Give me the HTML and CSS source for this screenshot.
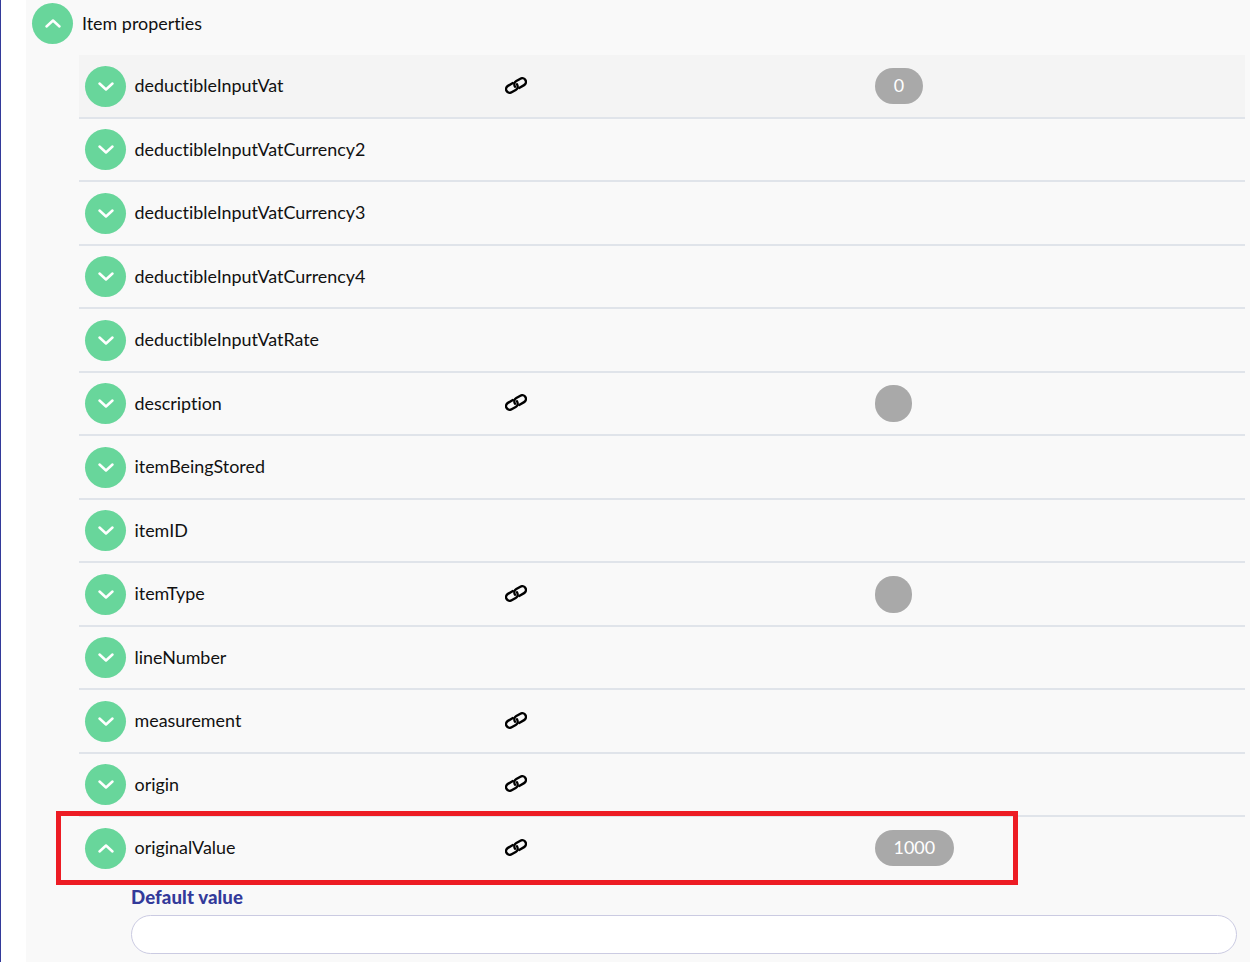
FILE: index.html
```html
<!DOCTYPE html>
<html lang="en">
<head>
<meta charset="utf-8">
<title>Item properties</title>
<link rel="stylesheet" href="styles.css">
</head>
<body>
<svg class="defs" width="0" height="0" aria-hidden="true">
  <defs>
    <symbol id="down" viewBox="0 0 18 11"><path d="M2.500 2.500l6.500 6 6.500-6" fill="none" stroke="#fff" stroke-width="2.500" stroke-linecap="round" stroke-linejoin="round"/></symbol>
    <symbol id="up" viewBox="0 0 18 11"><path d="M2.500 8.500l6.500-6 6.500 6" fill="none" stroke="#fff" stroke-width="2.500" stroke-linecap="round" stroke-linejoin="round"/></symbol>
    <symbol id="link" viewBox="0 0 22 17">
      <g transform="translate(11 8.500) rotate(-30)" fill="none" stroke="#000" stroke-width="2.400" stroke-linecap="round">
        <path d="M-1.500 -3.700H-7.200a3.700 3.700 0 0 0 0 7.400H-2.500C-0.300 3.700 1.500 1.800 1.500 -0.600"/>
        <path d="M1.500 3.700H7.200a3.700 3.700 0 0 0 0-7.400H2.500C0.300 -3.700 -1.500 -1.800 -1.500 0.600"/>
      </g>
    </symbol>
  </defs>
</svg>
<main class="panel">
  <header class="head">
    <span class="toggle"><svg class="chev"><use href="#up"/></svg></span>
    <span class="name">Item properties</span>
  </header>
  <div class="list">
    <div class="row first"><span class="toggle"><svg class="chev"><use href="#down"/></svg></span><span class="name">deductibleInputVat</span><svg class="link"><use href="#link"/></svg><span class="pill">0</span></div>
    <div class="row"><span class="toggle"><svg class="chev"><use href="#down"/></svg></span><span class="name">deductibleInputVatCurrency2</span></div>
    <div class="row"><span class="toggle"><svg class="chev"><use href="#down"/></svg></span><span class="name">deductibleInputVatCurrency3</span></div>
    <div class="row"><span class="toggle"><svg class="chev"><use href="#down"/></svg></span><span class="name">deductibleInputVatCurrency4</span></div>
    <div class="row"><span class="toggle"><svg class="chev"><use href="#down"/></svg></span><span class="name">deductibleInputVatRate</span></div>
    <div class="row"><span class="toggle"><svg class="chev"><use href="#down"/></svg></span><span class="name">description</span><svg class="link"><use href="#link"/></svg><span class="pill empty"></span></div>
    <div class="row"><span class="toggle"><svg class="chev"><use href="#down"/></svg></span><span class="name">itemBeingStored</span></div>
    <div class="row"><span class="toggle"><svg class="chev"><use href="#down"/></svg></span><span class="name">itemID</span></div>
    <div class="row"><span class="toggle"><svg class="chev"><use href="#down"/></svg></span><span class="name">itemType</span><svg class="link"><use href="#link"/></svg><span class="pill empty"></span></div>
    <div class="row"><span class="toggle"><svg class="chev"><use href="#down"/></svg></span><span class="name">lineNumber</span></div>
    <div class="row"><span class="toggle"><svg class="chev"><use href="#down"/></svg></span><span class="name">measurement</span><svg class="link"><use href="#link"/></svg></div>
    <div class="row"><span class="toggle"><svg class="chev"><use href="#down"/></svg></span><span class="name">origin</span><svg class="link"><use href="#link"/></svg></div>
    <div class="row last"><span class="toggle"><svg class="chev"><use href="#up"/></svg></span><span class="name">originalValue</span><svg class="link"><use href="#link"/></svg><span class="pill">1000</span></div>
    <div class="detail">
      <label class="label" for="dv">Default value</label>
      <input class="input" id="dv" type="text">
    </div>
  </div>
  <div class="mark"></div>
</main>
</body>
</html>
```
FILE: styles.css
```css
* { box-sizing: border-box; }
html, body { margin: 0; height: 962px; overflow: hidden; background: #fff; }
body {
  border-left: 1px solid #333a9a;
  padding-left: 25px;
  font-family: "Lato", "Open Sans", sans-serif;
  font-size: 17.9px;
  font-variant-ligatures: none;
  color: #111;
}
.defs { position: absolute; }
.panel { position: relative; background: #f9f9f9; height: 962px; padding-top: 3px; }
.head { display: flex; align-items: center; gap: 9px; padding-left: 6px; height: 41px; margin-bottom: 11px; }
.list { margin-left: 53px; margin-right: 5px; }
.row {
  display: grid;
  grid-template-columns: 41px 379px 370px 1fr;
  align-items: center;
  height: 63.5px;
  padding: 1px 0 0 6px;
  border-bottom: 2px solid #e0e4ea;
}
.row.first { background: #f4f4f4; }
.row.last { border-bottom-color: transparent; }
.toggle {
  display: flex; align-items: center; justify-content: center;
  width: 41px; height: 41px; border-radius: 50%;
  background: #68d69b;
}
.chev { width: 18px; height: 11px; display: block; }
.name { white-space: nowrap; margin-bottom: 2px; }
.row .name { padding-left: 8.5px; }
.link { width: 22px; height: 17px; margin-top: -2px; }
.pill {
  justify-self: start;
  min-width: 48px; height: 36px;
  padding: 0 18.5px 2px;
  border-radius: 18px;
  background: #a9a9a9;
  color: #fff;
  display: flex; align-items: center; justify-content: center;
}
.pill.empty { padding: 0; min-width: 37px; width: 37px; height: 37px; }
.detail { margin-left: 52px; padding-top: 5.5px; }
.label { display: block; font-weight: 900; font-size: 18.6px; letter-spacing: 0.1px; color: #333a9a; line-height: 22px; margin-bottom: 7px; }
.input {
  display: block; width: 1106px; height: 39px;
  border: 1px solid #cbcbe2; border-radius: 19.5px; background: #fff;
}
.mark {
  position: absolute; left: 30px; top: 811px;
  width: 962px; height: 74px;
  border: 5px solid #ed1c24;
}
```
